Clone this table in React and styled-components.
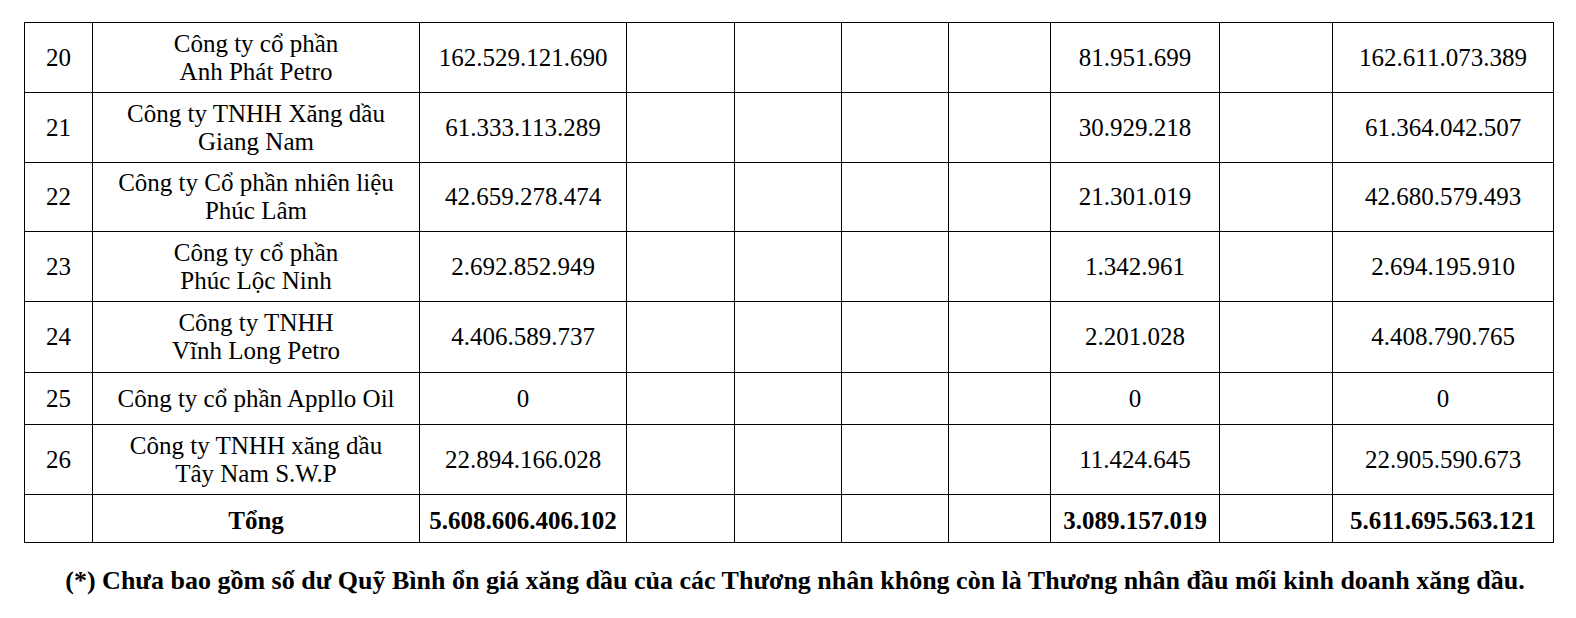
import React from 'react';
import styled, { createGlobalStyle } from 'styled-components';

const GlobalStyle = createGlobalStyle`
  html, body {
    margin: 0;
    padding: 0;
    background: #fff;
  }
  body {
    font-family: "Liberation Serif", "Times New Roman", serif;
    color: #000;
  }
`;

const Page = styled.div`
  width: 1576px;
  height: 618px;
  padding: 22px 0 0 24px;
  box-sizing: border-box;
  background: #fff;
`;

const Table = styled.table`
  border-collapse: collapse;
  table-layout: fixed;
  width: 1529px;
  font-size: 25px;
  line-height: 28px;
`;

const Row = styled.tr`
  height: ${p => p.$h}px;
`;

const Cell = styled.td`
  border: 1px solid #000;
  padding: ${p => (p.$bold ? '5px 4px 0' : '0 4px')};
  text-align: center;
  vertical-align: middle;
  font-weight: ${p => (p.$bold ? 700 : 400)};
  white-space: nowrap;
`;

const Note = styled.p`
  margin: 23px 0 0;
  width: 1542px;
  text-align: center;
  font-size: 26px;
  font-weight: 700;
  line-height: 30px;
`;

const widths = [68, 327, 207, 108, 107, 107, 102, 169, 113, 221];

const rows = [
  { no: '20', name: ['Công ty cổ phần', 'Anh Phát Petro'], a: '162.529.121.690', b: '81.951.699', c: '162.611.073.389', h: 70 },
  { no: '21', name: ['Công ty TNHH Xăng dầu', 'Giang Nam'], a: '61.333.113.289', b: '30.929.218', c: '61.364.042.507', h: 70 },
  { no: '22', name: ['Công ty Cổ phần nhiên liệu', 'Phúc Lâm'], a: '42.659.278.474', b: '21.301.019', c: '42.680.579.493', h: 69 },
  { no: '23', name: ['Công ty cổ phần', 'Phúc Lộc Ninh'], a: '2.692.852.949', b: '1.342.961', c: '2.694.195.910', h: 70 },
  { no: '24', name: ['Công ty TNHH', 'Vĩnh Long Petro'], a: '4.406.589.737', b: '2.201.028', c: '4.408.790.765', h: 71 },
  { no: '25', name: ['Công ty cổ phần Appllo Oil'], a: '0', b: '0', c: '0', h: 52 },
  { no: '26', name: ['Công ty TNHH xăng dầu', 'Tây Nam S.W.P'], a: '22.894.166.028', b: '11.424.645', c: '22.905.590.673', h: 70 },
];

const Line = styled.div``;

const DataRow = ({ row }) => (
  <Row $h={row.h}>
    <Cell>{row.no}</Cell>
    <Cell>{row.name.map(n => <Line key={n}>{n}</Line>)}</Cell>
    <Cell>{row.a}</Cell>
    <Cell />
    <Cell />
    <Cell />
    <Cell />
    <Cell>{row.b}</Cell>
    <Cell />
    <Cell>{row.c}</Cell>
  </Row>
);

export default function App() {
  return (
    <Page>
      <GlobalStyle />
      <Table>
        <colgroup>
          {widths.map((w, i) => <col key={i} style={{ width: w }} />)}
        </colgroup>
        <tbody>
          {rows.map(r => <DataRow key={r.no} row={r} />)}
          <Row $h={48}>
            <Cell />
            <Cell $bold>Tổng</Cell>
            <Cell $bold>5.608.606.406.102</Cell>
            <Cell />
            <Cell />
            <Cell />
            <Cell />
            <Cell $bold>3.089.157.019</Cell>
            <Cell />
            <Cell $bold>5.611.695.563.121</Cell>
          </Row>
        </tbody>
      </Table>
      <Note>
        (*) Chưa bao gồm số dư Quỹ Bình ổn giá xăng dầu của các Thương nhân không còn là Thương nhân đầu mối kinh doanh xăng dầu.
      </Note>
    </Page>
  );
}
